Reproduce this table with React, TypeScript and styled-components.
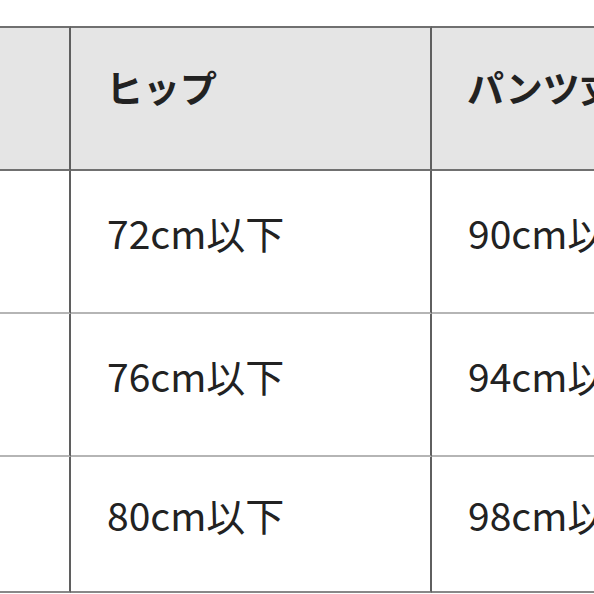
import styled, { createGlobalStyle } from "styled-components";

const GlobalStyle = createGlobalStyle`
  html, body {
    margin: 0;
    padding: 0;
    background: #fff;
  }
  body {
    font-family: "Noto Sans CJK JP", "Noto Sans", sans-serif;
    color: #222;
  }
`;

const Frame = styled.div`
  width: 594px;
  height: 594px;
  overflow: hidden;
  padding-top: 26px;
  box-sizing: border-box;
`;

const Table = styled.table`
  border-collapse: separate;
  border-spacing: 0;
  table-layout: fixed;
  width: 1100px;
`;

const HeadCell = styled.th`
  box-sizing: border-box;
  height: 145px;
  background: #e5e5e5;
  border-top: 2px solid #707070;
  border-bottom: 2px solid #707070;
  border-right: 2px solid #5f5f5f;
  text-align: left;
  vertical-align: middle;
  padding: 0 0 24px 35px;
  font-size: 37px;
  font-weight: 700;
  white-space: nowrap;
`;

const Cell = styled.td<{ $last?: boolean }>`
  box-sizing: border-box;
  height: ${(p) => (p.$last ? "136px" : "143px")};
  border-bottom: 2px solid ${(p) => (p.$last ? "#888" : "#b5b5b5")};
  border-right: 2px solid #5f5f5f;
  text-align: left;
  vertical-align: middle;
  padding: 0 0 20px 36px;
  font-size: 39px;
  font-weight: 400;
  white-space: nowrap;
`;

const rows = [
  ["", "72cm以下", "90cm以下", ""],
  ["", "76cm以下", "94cm以下", ""],
  ["", "80cm以下", "98cm以下", ""],
];

export default function App() {
  return (
    <>
      <GlobalStyle />
      <Frame>
        <Table>
          <colgroup>
            <col style={{ width: 71 }} />
            <col style={{ width: 361 }} />
            <col style={{ width: 361 }} />
            <col />
          </colgroup>
          <thead>
            <tr>
              <HeadCell />
              <HeadCell>ヒップ</HeadCell>
              <HeadCell>パンツ丈</HeadCell>
              <HeadCell />
            </tr>
          </thead>
          <tbody>
            {rows.map((r, i) => (
              <tr key={i}>
                {r.map((c, j) => (
                  <Cell key={j} $last={i === rows.length - 1}>
                    {c}
                  </Cell>
                ))}
              </tr>
            ))}
          </tbody>
        </Table>
      </Frame>
    </>
  );
}
